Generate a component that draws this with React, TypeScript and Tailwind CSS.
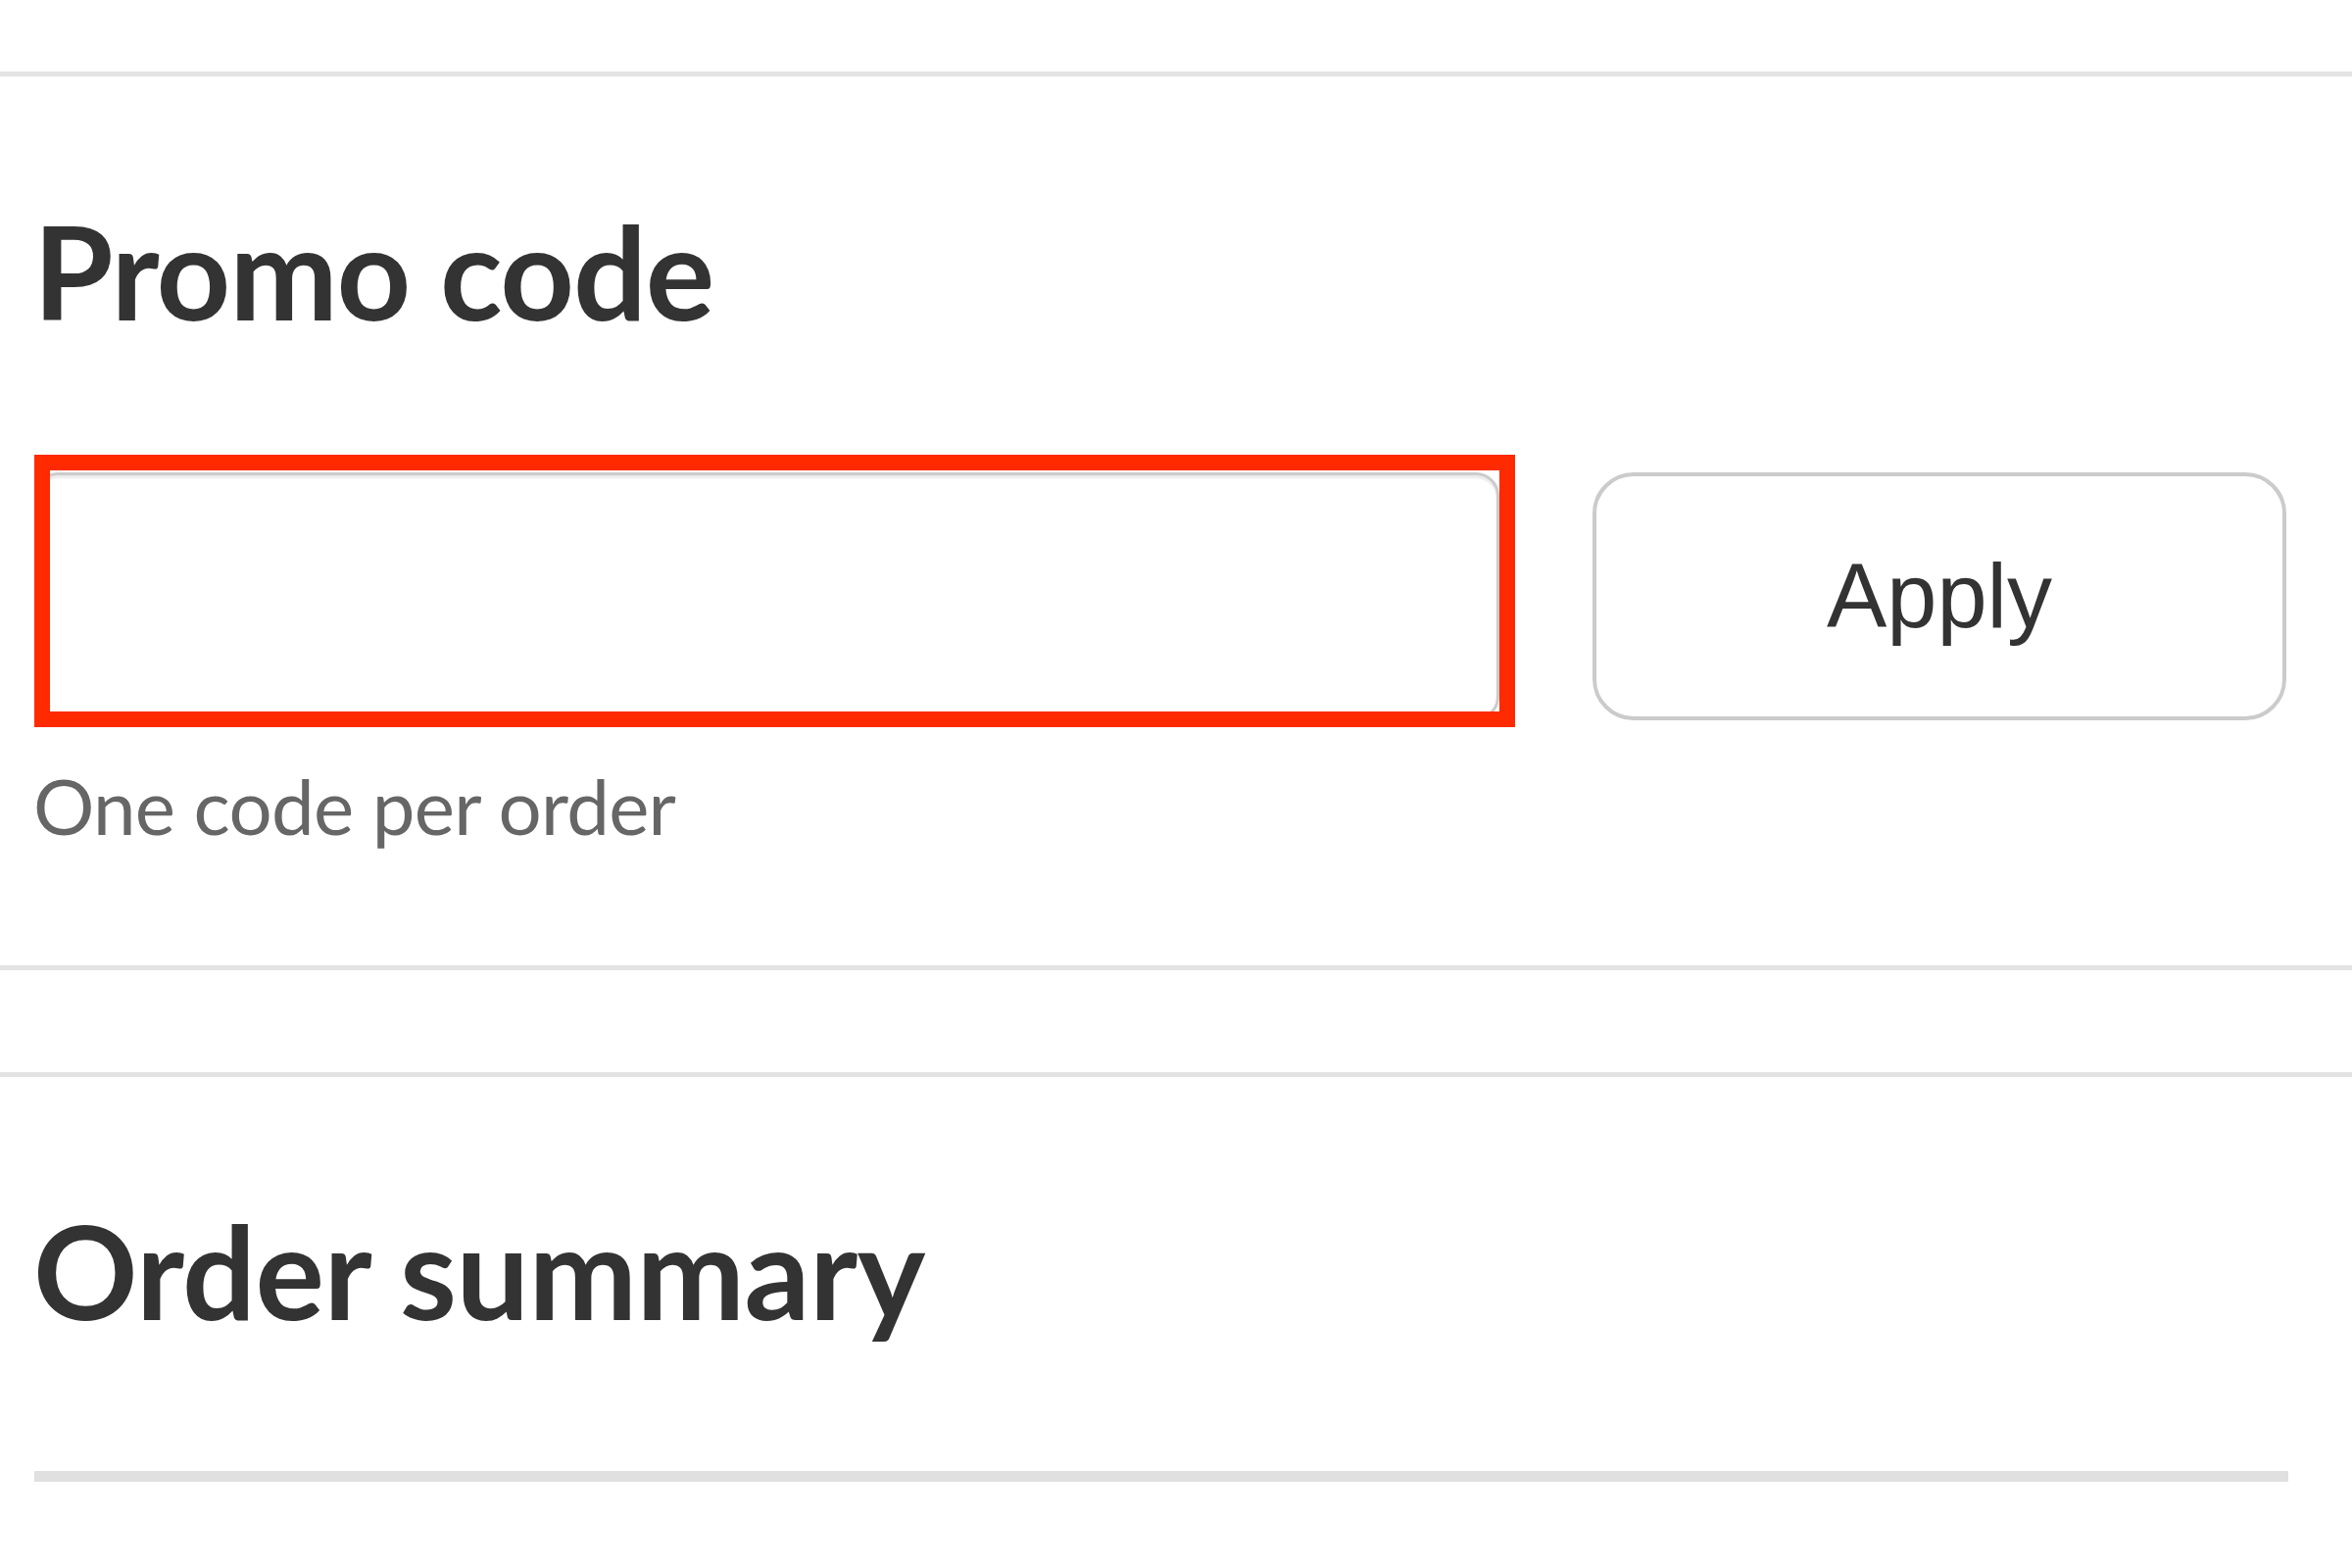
import React from "react";

export default function App() {
  return (
    <div className="w-[2400px] h-[1600px] bg-white overflow-hidden" style={{ fontFamily: "Lato, 'Noto Sans', sans-serif" }}>
      <div className="h-[73px]" />
      <div className="h-[5px] bg-[#e3e3e3]" />

      <div className="pl-[34px] pr-[67px]">
        <h2 className="mt-[132px] text-[132px] leading-none font-bold text-[#333333] tracking-[-1.2px]">Promo code</h2>

        <div className="mt-[140px] flex items-stretch gap-[95px] pl-[1px]">
          <div className="relative flex-1 h-[253px]">
            <input
              type="text"
              aria-label="Promo code"
              className="w-full h-full rounded-[24px] border-[3px] border-[#cccccc] bg-white outline-none shadow-[inset_0_3px_2px_rgba(0,0,0,0.08)]"
            />
            <div className="pointer-events-none absolute left-0 -right-[16px] -top-[18px] -bottom-[7px] border-[16px] border-[#ff2a00]" />
          </div>
          <button
            type="button"
            className="w-[708px] h-[253px] rounded-[42px] border-[4px] border-[#cbcbcb] bg-white flex items-center justify-center pb-[2px] text-[92px] leading-none text-[#333333]"
            style={{ fontFamily: "'Liberation Sans', Arial, sans-serif" }}
          >
            Apply
          </button>
        </div>

        <p className="mt-[48px] text-[78px] leading-none text-[#666666] tracking-[-0.7px]">One code per order</p>
      </div>

      <div className="mt-[124px] h-[5px] bg-[#e3e3e3]" />
      <div className="mt-[104px] h-[5px] bg-[#e3e3e3]" />

      <div className="pl-[34px] pr-[65px]">
        <h2 className="mt-[131px] text-[132px] leading-none font-bold text-[#333333] tracking-[-0.5px]">Order summary</h2>
        <div className="mt-[139px] ml-[1px] h-[11px] bg-[#e0e0e0]" />
      </div>
    </div>
  );
}
